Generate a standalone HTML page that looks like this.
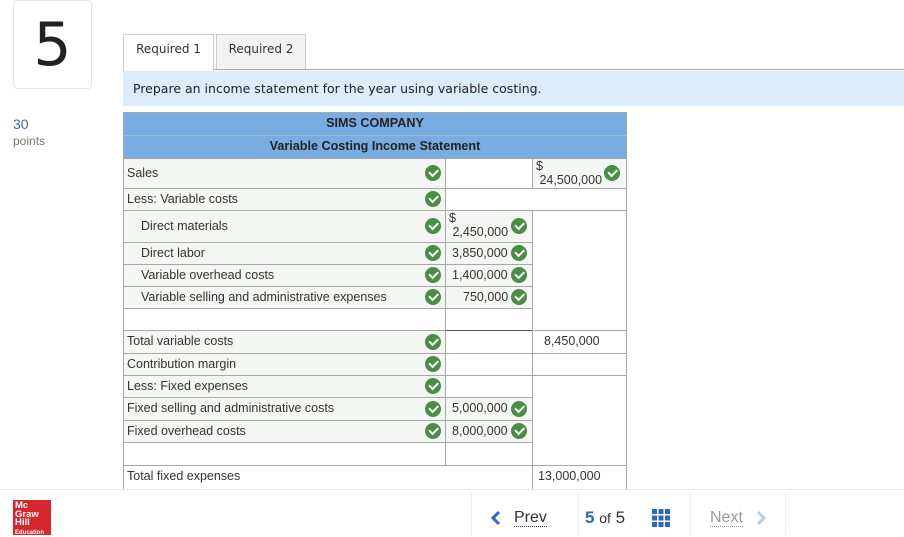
<!DOCTYPE html><html><head><style>
*{margin:0;padding:0;box-sizing:border-box}
body{width:904px;height:535px;background:#fff;position:relative;overflow:hidden;font-family:"Liberation Sans",Arial,sans-serif;color:#222}
.a{position:absolute}
.c{position:absolute;border:1px solid #a8a8a8;font-size:12.5px;color:#333;line-height:20px;padding-left:3px}
.g{background:#f4f6f3}
.k{position:absolute;width:16px;height:16px;border-radius:50%;background:#4a8d45}
.k:after{content:"";position:absolute;left:4px;top:4px;width:7px;height:3.5px;border-left:2px solid #fff;border-bottom:2px solid #fff;transform:rotate(-45deg)}
.v{font-family:"DejaVu Sans",sans-serif}
</style></head><body>
<div class="a" style="left:13px;top:0;width:79px;height:89px;border:1px solid #e6e6e6;border-radius:4px;font-size:60px;text-align:center;line-height:88px;color:#222;font-family:'DejaVu Sans',sans-serif">5</div>
<div class="a" style="left:13px;top:116px;font-size:14px;color:#3a6fa8">30</div>
<div class="a" style="left:13px;top:134px;font-size:12px;color:#777">points</div>

<div class="a v" style="left:123px;top:34px;width:91px;height:37px;border:1px solid #ccc;border-bottom:none;background:#fff;font-size:12px;line-height:28px;text-align:center;color:#333">Required 1</div>
<div class="a v" style="left:216px;top:34px;width:90px;height:36px;border:1px solid #ccc;background:#f2f2f2;font-size:12px;line-height:28px;text-align:center;color:#333">Required 2</div>
<div class="a" style="left:214px;top:69px;width:690px;height:1px;background:#aaa"></div>
<div class="a v" style="left:123px;top:71px;width:781px;height:35px;background:#dcecfa;font-size:12.5px;line-height:36px;padding-left:10px;color:#222">Prepare an income statement for the year using variable costing.</div>

<div class="a" style="left:123px;top:112px;width:504px;height:47px;background:#78ace2;border:1px solid #9ab"></div>
<div class="a" style="left:123px;top:135px;width:504px;height:1px;background:#9bb8d4"></div>
<div class="a" style="left:123px;top:116px;width:504px;text-align:center;font-size:12.6px;font-weight:bold;color:#222">SIMS COMPANY</div>
<div class="a" style="left:123px;top:139px;width:504px;text-align:center;font-size:12.6px;font-weight:bold;color:#222">Variable Costing Income Statement</div>

<div class="c g" style="left:123px;top:158px;width:323px;height:31px;padding-top:4px">Sales</div>
<div class="c" style="left:445px;top:158px;width:88px;height:31px"></div>
<div class="c g" style="left:532px;top:158px;width:95px;height:31px;line-height:14px">$<br>&nbsp;24,500,000</div>
<div class="k" style="left:425px;top:165px"></div><div class="k" style="left:604px;top:165px"></div>
<div class="c g" style="left:123px;top:188px;width:323px;height:23px">Less: Variable costs</div>
<div class="c" style="left:445px;top:188px;width:182px;height:23px"></div>
<div class="k" style="left:425px;top:191px"></div>
<div class="c g" style="left:123px;top:210px;width:323px;height:33px;padding-left:17px;padding-top:5px">Direct materials</div>
<div class="c g" style="left:445px;top:210px;width:88px;height:33px;line-height:14px">$<br>&nbsp;2,450,000</div>
<div class="k" style="left:425px;top:218px"></div><div class="k" style="left:511px;top:218px"></div>
<div class="c g" style="left:123px;top:242px;width:323px;height:23px;padding-left:17px">Direct labor</div>
<div class="c g" style="left:445px;top:242px;width:88px;height:23px;padding-left:6px">3,850,000</div>
<div class="k" style="left:425px;top:245px"></div><div class="k" style="left:511px;top:245px"></div>
<div class="c g" style="left:123px;top:264px;width:323px;height:23px;padding-left:17px">Variable overhead costs</div>
<div class="c g" style="left:445px;top:264px;width:88px;height:23px;padding-left:6px">1,400,000</div>
<div class="k" style="left:425px;top:267px"></div><div class="k" style="left:511px;top:267px"></div>
<div class="c g" style="left:123px;top:286px;width:323px;height:23px;padding-left:17px">Variable selling and administrative expenses</div>
<div class="c g" style="left:445px;top:286px;width:88px;height:23px;padding-left:17px">750,000</div>
<div class="k" style="left:425px;top:289px"></div><div class="k" style="left:511px;top:289px"></div>
<div class="c" style="left:532px;top:210px;width:95px;height:121px"></div>
<div class="c" style="left:123px;top:308px;width:323px;height:23px"></div>
<div class="c" style="left:445px;top:308px;width:88px;height:23px"></div>
<div class="c g" style="left:123px;top:330px;width:323px;height:24px">Total variable costs</div>
<div class="c" style="left:445px;top:330px;width:88px;height:24px;border-top:1.5px solid #555"></div>
<div class="c" style="left:532px;top:330px;width:95px;height:24px;border-bottom:1.5px solid #555;padding-left:11px">8,450,000</div>
<div class="k" style="left:425px;top:334px"></div>
<div class="c g" style="left:123px;top:353px;width:323px;height:23px">Contribution margin</div>
<div class="c" style="left:445px;top:353px;width:88px;height:23px"></div>
<div class="c" style="left:532px;top:353px;width:95px;height:23px"></div>
<div class="k" style="left:425px;top:356px"></div>
<div class="c g" style="left:123px;top:375px;width:323px;height:23px">Less: Fixed expenses</div>
<div class="c" style="left:445px;top:375px;width:88px;height:23px"></div>
<div class="k" style="left:425px;top:378px"></div>
<div class="c g" style="left:123px;top:397px;width:323px;height:24px">Fixed selling and administrative costs</div>
<div class="c g" style="left:445px;top:397px;width:88px;height:24px;padding-left:6px">5,000,000</div>
<div class="k" style="left:425px;top:401px"></div><div class="k" style="left:511px;top:401px"></div>
<div class="c g" style="left:123px;top:420px;width:323px;height:23px">Fixed overhead costs</div>
<div class="c g" style="left:445px;top:420px;width:88px;height:23px;padding-left:6px">8,000,000</div>
<div class="k" style="left:425px;top:423px"></div><div class="k" style="left:511px;top:423px"></div>
<div class="c" style="left:532px;top:375px;width:95px;height:91px"></div>
<div class="c" style="left:123px;top:442px;width:323px;height:24px"></div>
<div class="c" style="left:445px;top:442px;width:88px;height:24px"></div>
<div class="c" style="left:123px;top:465px;width:410px;height:24px;border-bottom:none">Total fixed expenses</div>
<div class="c" style="left:532px;top:465px;width:95px;height:24px;border-bottom:none;padding-left:5px">13,000,000</div>

<div class="a" style="left:0;top:489px;width:904px;height:1px;background:#e8e8e8"></div>
<div class="a" style="left:13px;top:500px;width:38px;height:35px;background:#d7262e;color:#fff;font-size:9.5px;font-weight:bold;line-height:8.5px;padding:2px 0 0 2px">Mc<br>Graw<br>Hill<br><span style="font-size:6px">Education</span></div>
<div class="a" style="left:471px;top:493px;width:1px;height:42px;background:#eee"></div>
<div class="a" style="left:578px;top:493px;width:1px;height:42px;background:#eee"></div>
<div class="a" style="left:690px;top:493px;width:1px;height:42px;background:#eee"></div>
<div class="a" style="left:785px;top:493px;width:1px;height:42px;background:#eee"></div>
<svg class="a" style="left:490px;top:510px" width="12" height="16"><path d="M9 2 L3 8 L9 14" fill="none" stroke="#2a6ab8" stroke-width="3"/></svg>
<div class="a" style="left:514px;top:509px;font-size:16px;color:#333;border-bottom:1px dotted #333;line-height:17px">Prev</div>
<div class="a" style="left:585px;top:509px;font-size:17px;line-height:17px;color:#333"><b style="color:#2a6ab8">5</b> <span style="font-size:14px">of</span> 5</div>
<svg class="a" style="left:652px;top:509px" width="18" height="18"><g fill="#2a6ab8"><rect x="0" y="0" width="5" height="5"/><rect x="6.5" y="0" width="5" height="5"/><rect x="13" y="0" width="5" height="5"/><rect x="0" y="6.5" width="5" height="5"/><rect x="6.5" y="6.5" width="5" height="5"/><rect x="13" y="6.5" width="5" height="5"/><rect x="0" y="13" width="5" height="5"/><rect x="6.5" y="13" width="5" height="5"/><rect x="13" y="13" width="5" height="5"/></g></svg>
<div class="a" style="left:710px;top:509px;font-size:16px;color:#999;border-bottom:1px dotted #999;line-height:17px">Next</div>
<svg class="a" style="left:755px;top:510px" width="12" height="16"><path d="M3 2 L9 8 L3 14" fill="none" stroke="#b8cfe8" stroke-width="3"/></svg>
</body></html>
